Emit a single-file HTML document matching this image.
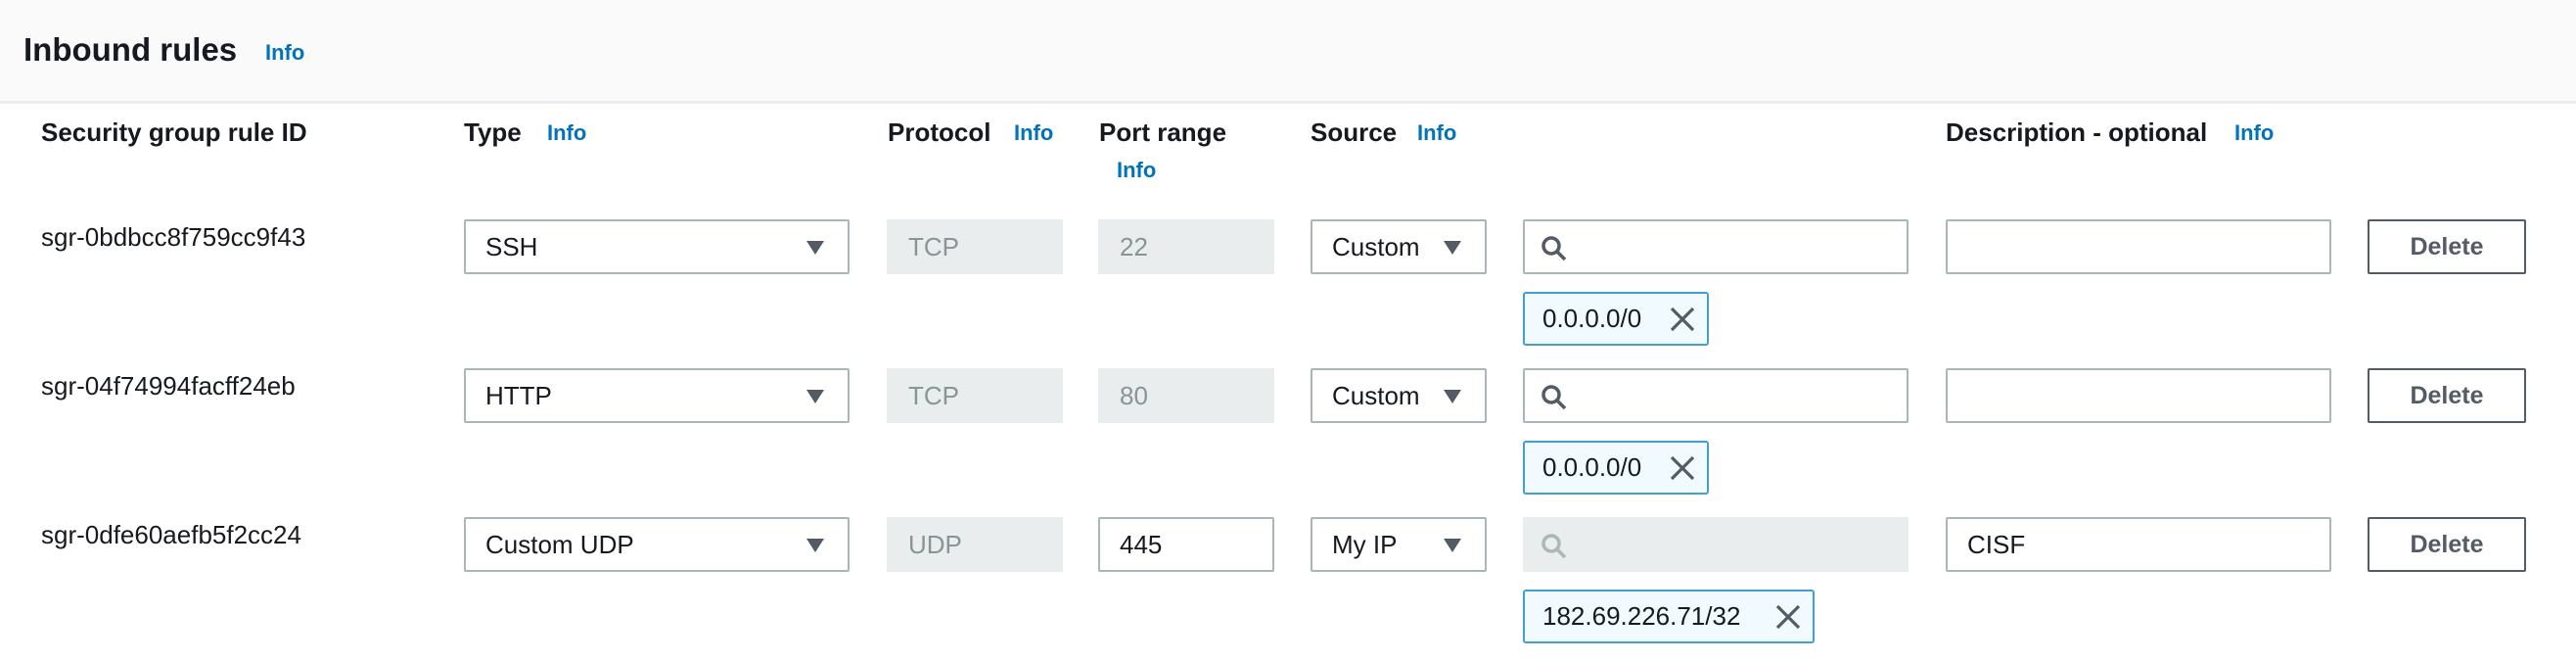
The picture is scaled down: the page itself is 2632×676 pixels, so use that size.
<!DOCTYPE html>
<html><head><style>
body{margin:0;width:2632px;height:676px;background:#fff;font-family:"Liberation Sans",sans-serif;position:relative;overflow:hidden;color:#16191f}
.a{position:absolute;box-sizing:border-box}
.hdr{left:0;top:0;width:2632px;height:106px;background:#fafafa;border-bottom:3px solid #eaeded}
.t{font-weight:bold;font-size:33px}
.info{color:#0073bb;font-weight:bold;font-size:22px}
.h{font-weight:bold;font-size:26px}
.id{font-size:26px}
.box{height:56px;border:2px solid #aab7b8;border-radius:2px;background:#fff;font-size:26px;padding:0 0 0 20px;line-height:52px}
.dis{background:#eaeded;border-color:#eaeded;color:#879596}
.car{position:absolute;right:24px;top:20px;width:0;height:0;border-left:9px solid transparent;border-right:9px solid transparent;border-top:14px solid #545b64}
.tok{height:55px;border:2px solid #44a0c8;border-radius:3px;background:#f1faff;font-size:26px;line-height:51px;padding-left:18px}
.del{height:56px;border:2px solid #545b64;border-radius:2px;color:#545b64;font-weight:bold;font-size:25px;text-align:center;line-height:52px}
</style></head><body>
<div class="a hdr"></div>
<div class="a t" style="left:24px;top:32px">Inbound rules</div>
<div class="a info" style="left:271px;top:41px">Info</div>

<div class="a h" style="left:42px;top:120px">Security group rule ID</div>
<div class="a h" style="left:474px;top:120px">Type</div><div class="a info" style="left:559px;top:123px">Info</div>
<div class="a h" style="left:907px;top:120px">Protocol</div><div class="a info" style="left:1036px;top:123px">Info</div>
<div class="a h" style="left:1123px;top:120px">Port range</div><div class="a info" style="left:1141px;top:161px">Info</div>
<div class="a h" style="left:1339px;top:120px">Source</div><div class="a info" style="left:1448px;top:123px">Info</div>
<div class="a h" style="left:1988px;top:120px">Description - optional</div><div class="a info" style="left:2283px;top:123px">Info</div>

<div class="a id" style="left:42px;top:227px">sgr-0bdbcc8f759cc9f43</div>
<div class="a box" style="left:474px;top:224px;width:394px">SSH<span class="car"></span></div>
<div class="a box dis" style="left:906px;top:224px;width:180px">TCP</div>
<div class="a box dis" style="left:1122px;top:224px;width:180px">22</div>
<div class="a box" style="left:1339px;top:224px;width:180px">Custom<span class="car"></span></div>
<div class="a box" style="left:1556px;top:224px;width:394px"><svg style="position:absolute;left:16px;top:14px" width="30" height="28"><circle cx="11" cy="11" r="8" fill="none" stroke="#545b64" stroke-width="3.5"/><line x1="17" y1="17" x2="25" y2="25" stroke="#545b64" stroke-width="3.5"/></svg></div>
<div class="a box" style="left:1988px;top:224px;width:394px"></div>
<div class="a del" style="left:2419px;top:224px;width:162px">Delete</div>
<div class="a tok" style="left:1556px;top:298px;width:190px">0.0.0.0/0<svg style="position:absolute;left:148px;top:13px" width="26" height="26"><path d="M2 2L24 24M24 2L2 24" stroke="#545b64" stroke-width="3.2"/></svg></div>

<div class="a id" style="left:42px;top:379px">sgr-04f74994facff24eb</div>
<div class="a box" style="left:474px;top:376px;width:394px">HTTP<span class="car"></span></div>
<div class="a box dis" style="left:906px;top:376px;width:180px">TCP</div>
<div class="a box dis" style="left:1122px;top:376px;width:180px">80</div>
<div class="a box" style="left:1339px;top:376px;width:180px">Custom<span class="car"></span></div>
<div class="a box" style="left:1556px;top:376px;width:394px"><svg style="position:absolute;left:16px;top:14px" width="30" height="28"><circle cx="11" cy="11" r="8" fill="none" stroke="#545b64" stroke-width="3.5"/><line x1="17" y1="17" x2="25" y2="25" stroke="#545b64" stroke-width="3.5"/></svg></div>
<div class="a box" style="left:1988px;top:376px;width:394px"></div>
<div class="a del" style="left:2419px;top:376px;width:162px">Delete</div>
<div class="a tok" style="left:1556px;top:450px;width:190px">0.0.0.0/0<svg style="position:absolute;left:148px;top:13px" width="26" height="26"><path d="M2 2L24 24M24 2L2 24" stroke="#545b64" stroke-width="3.2"/></svg></div>

<div class="a id" style="left:42px;top:531px">sgr-0dfe60aefb5f2cc24</div>
<div class="a box" style="left:474px;top:528px;width:394px">Custom UDP<span class="car"></span></div>
<div class="a box dis" style="left:906px;top:528px;width:180px">UDP</div>
<div class="a box" style="left:1122px;top:528px;width:180px">445</div>
<div class="a box" style="left:1339px;top:528px;width:180px">My IP<span class="car"></span></div>
<div class="a box dis" style="left:1556px;top:528px;width:394px"><svg style="position:absolute;left:16px;top:14px" width="30" height="28"><circle cx="11" cy="11" r="8" fill="none" stroke="#aab7b8" stroke-width="3.5"/><line x1="17" y1="17" x2="25" y2="25" stroke="#aab7b8" stroke-width="3.5"/></svg></div>
<div class="a box" style="left:1988px;top:528px;width:394px">CISF</div>
<div class="a del" style="left:2419px;top:528px;width:162px">Delete</div>
<div class="a tok" style="left:1556px;top:602px;width:298px">182.69.226.71/32<svg style="position:absolute;left:256px;top:13px" width="26" height="26"><path d="M2 2L24 24M24 2L2 24" stroke="#545b64" stroke-width="3.2"/></svg></div>
</body></html>
